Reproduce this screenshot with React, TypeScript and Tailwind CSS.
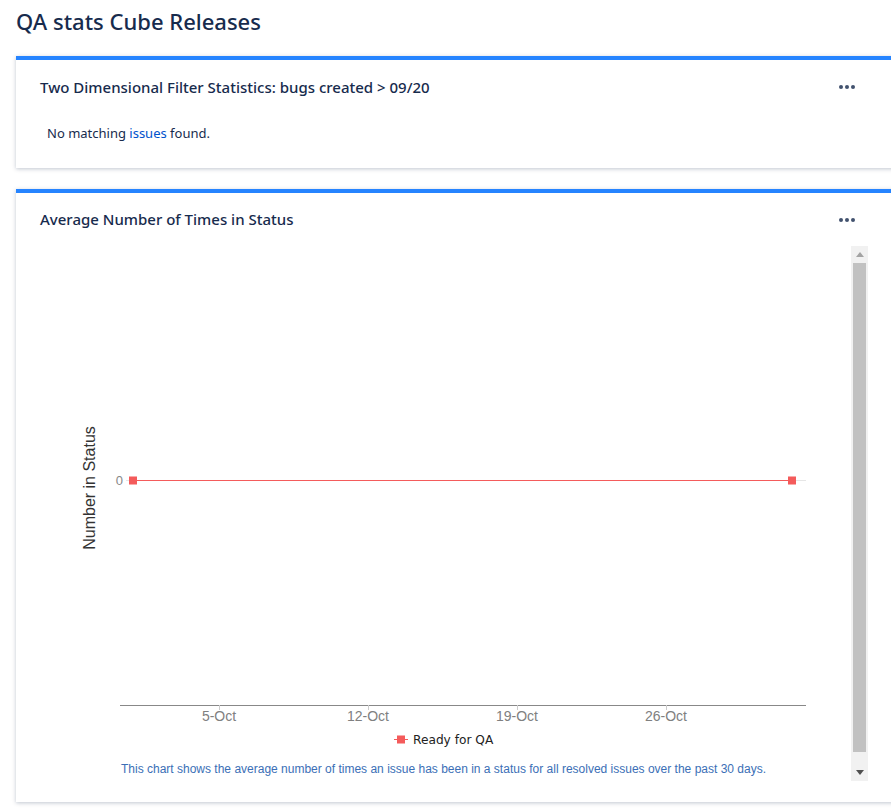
import React from "react";

function Dots() {
  return (
    <div className="flex items-center gap-[2px]">
      <span className="block h-[4px] w-[4px] rounded-full bg-[#42526e]" />
      <span className="block h-[4px] w-[4px] rounded-full bg-[#42526e]" />
      <span className="block h-[4px] w-[4px] rounded-full bg-[#42526e]" />
    </div>
  );
}

function Chart() {
  const ticks = [
    { x: 179, l: "5-Oct" },
    { x: 328, l: "12-Oct" },
    { x: 477, l: "19-Oct" },
    { x: 626, l: "26-Oct" },
  ];
  return (
    <svg width="811" height="535" viewBox="0 0 811 535" className="block" style={{ fontFamily: '"Liberation Sans", Arial, sans-serif' }}>
      <text x="51" y="242" transform="rotate(-90 51 242)" textAnchor="middle" dominantBaseline="middle" fontSize="16" fill="#333">
        Number in Status
      </text>
      <text x="83" y="239" textAnchor="end" fontSize="13" fill="#888">0</text>
      <line x1="86" y1="234.5" x2="766" y2="234.5" stroke="#e6e6e6" strokeWidth="1" />
      <line x1="93" y1="234.5" x2="752" y2="234.5" stroke="#f45b5b" strokeWidth="1" />
      <rect x="89" y="230.5" width="8" height="8" fill="#f45b5b" />
      <rect x="748" y="230.5" width="8" height="8" fill="#f45b5b" />
      <line x1="80" y1="459.5" x2="766" y2="459.5" stroke="#888" strokeWidth="1" />
      {ticks.map((t) => (
        <g key={t.l}>
          <line x1={t.x + 0.5} y1="459" x2={t.x + 0.5} y2="464" stroke="#ccc" />
          <text x={t.x} y="475" textAnchor="middle" fontSize="14" fill="#808080">{t.l}</text>
        </g>
      ))}
      <line x1="354" y1="493.5" x2="368" y2="493.5" stroke="#f45b5b" strokeWidth="1" />
      <rect x="357" y="489.5" width="8" height="8" fill="#f45b5b" />
      <text x="373" y="498" fontSize="12.2" fill="#222" style={{ fontFamily: '"DejaVu Sans", sans-serif' }}>Ready for QA</text>
      <text x="81" y="527" fontSize="12" fill="#3b6fb6">
        This chart shows the average number of times an issue has been in a status for all resolved issues over the past 30 days.
      </text>
    </svg>
  );
}

function Scrollbar() {
  return (
    <div className="flex w-[17px] flex-col bg-[#f1f1f1]">
      <div className="flex h-[17px] items-center justify-center">
        <svg width="8" height="5" viewBox="0 0 8 5"><path d="M4 0 L8 5 L0 5 Z" fill="#a3a3a3" /></svg>
      </div>
      <div className="mx-[2px] h-[489px] bg-[#c1c1c1]" />
      <div className="flex-1" />
      <div className="flex h-[17px] items-center justify-center">
        <svg width="8" height="5" viewBox="0 0 8 5"><path d="M0 0 L8 0 L4 5 Z" fill="#505050" /></svg>
      </div>
    </div>
  );
}

export default function App() {
  return (
    <div
      className="h-[809px] w-[891px] overflow-hidden bg-white text-[#172b4d]"
      style={{ fontFamily: '"Noto Sans", "Open Sans", sans-serif' }}
    >
      <div className="pl-[16px]">
        <h1 className="h-[44px] pt-[4px] text-[22px] font-medium leading-[34px] text-[#172b4d]">QA stats Cube Releases</h1>
        <div className="mt-[12px] h-[112px] w-[900px] border-t-4 border-[#2684ff] bg-white shadow-[0_1px_4px_rgba(9,30,66,0.25)]">
          <div className="flex h-[54px] items-center justify-between pl-[24px] pr-[61px]">
            <div className="text-[15px] font-medium">Two Dimensional Filter Statistics: bugs created &gt; 09/20</div>
            <Dots />
          </div>
          <div className="pl-[31px] pt-[9px] text-[13px] leading-[20px]">
            No matching <span className="text-[#0052cc]">issues</span> found.
          </div>
        </div>
        <div className="mt-[21px] h-[613px] w-[900px] border-t-4 border-[#2684ff] bg-white shadow-[0_1px_4px_rgba(9,30,66,0.25)]">
          <div className="flex h-[53px] items-center justify-between pl-[24px] pr-[61px]">
            <div className="text-[15px] font-medium">Average Number of Times in Status</div>
            <Dots />
          </div>
          <div className="flex h-[535px] pl-[24px]">
            <Chart />
            <Scrollbar />
          </div>
        </div>
      </div>
    </div>
  );
}
